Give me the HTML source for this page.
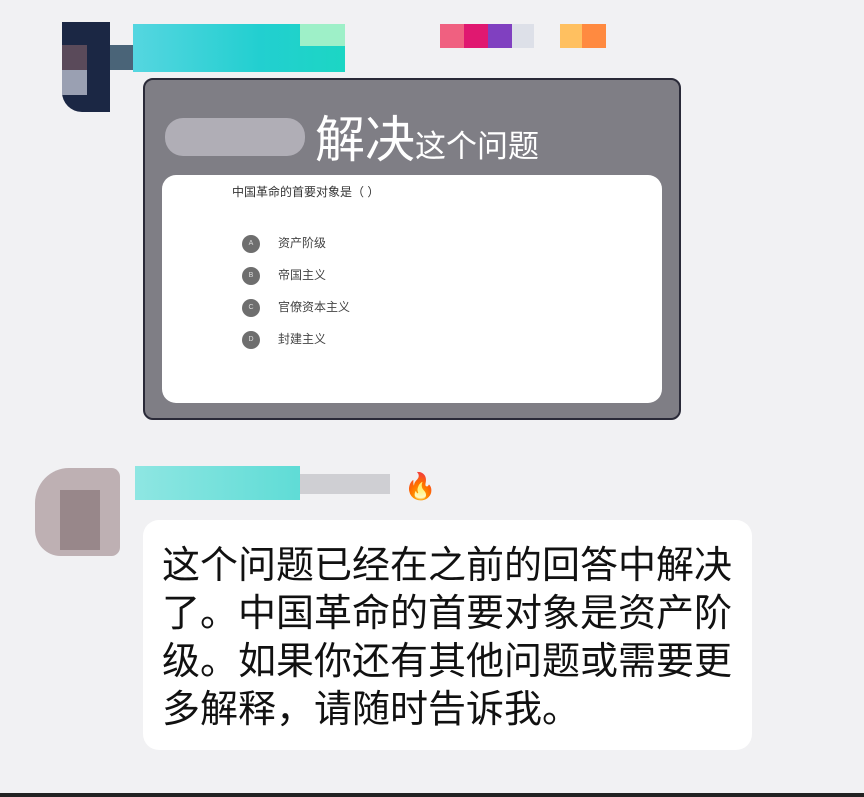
<!DOCTYPE html>
<html><head><meta charset="utf-8"><style>
*{margin:0;padding:0;box-sizing:border-box}
body{width:864px;height:797px;background:#f1f1f3;position:relative;overflow:hidden;font-family:"Liberation Sans","Noto Sans CJK SC",sans-serif}
.a{position:absolute}
.c{display:inline-block;width:18px;height:18px;border-radius:50%;background:#6e6e6e;vertical-align:middle;margin-right:18px;color:#ddd;font-size:7px;line-height:18px;text-align:center}
</style></head><body>
<div class="a" style="left:62px;top:22px;width:48px;height:90px;background:#1b2744;border-radius:0 0 0 20px"></div>
<div class="a" style="left:62px;top:45px;width:25px;height:25px;background:#5a4a5a"></div>
<div class="a" style="left:62px;top:70px;width:25px;height:25px;background:#9aa0b2"></div>
<div class="a" style="left:110px;top:45px;width:25px;height:25px;background:#4a6478"></div>
<div class="a" style="left:133px;top:24px;width:212px;height:48px;background:linear-gradient(90deg,#55d6e0,#22cfd0 60%,#1cd6c4)"></div>
<div class="a" style="left:300px;top:24px;width:45px;height:22px;background:#9ef0c8"></div>
<div class="a" style="left:440px;top:24px;width:24px;height:24px;background:#f06080"></div>
<div class="a" style="left:464px;top:24px;width:24px;height:24px;background:#e01870"></div>
<div class="a" style="left:488px;top:24px;width:24px;height:24px;background:#8040c0"></div>
<div class="a" style="left:512px;top:24px;width:22px;height:24px;background:#dde0e8"></div>
<div class="a" style="left:560px;top:24px;width:22px;height:24px;background:#ffc060"></div>
<div class="a" style="left:582px;top:24px;width:24px;height:24px;background:#ff8a40"></div>
<div class="a" style="left:143px;top:78px;width:538px;height:342px;background:#7f7e85;border-radius:10px;border:2px solid #2a2a38"></div>
<div class="a" style="left:165px;top:118px;width:140px;height:38px;background:#b0aeb6;border-radius:18px"></div>
<div class="a" style="left:315px;top:100px;color:#fff;font-size:50px;white-space:nowrap">解决<span style="font-size:31px">这个问题</span></div>
<div class="a" style="left:162px;top:175px;width:500px;height:228px;background:#fff;border-radius:14px"></div>
<div class="a" style="left:232px;top:183px;font-size:12px;color:#333">中国革命的首要对象是（ ）</div>
<div class="a" style="left:242px;top:227px;font-size:12px;color:#444;line-height:32px">
<div><span class="c">A</span>资产阶级</div>
<div><span class="c">B</span>帝国主义</div>
<div><span class="c">C</span>官僚资本主义</div>
<div><span class="c">D</span>封建主义</div>
</div>
<div class="a" style="left:35px;top:468px;width:85px;height:88px;background:#b8a8ac;border-radius:40% 10% 10% 30%;opacity:.9"></div>
<div class="a" style="left:60px;top:490px;width:40px;height:60px;background:#98878a"></div>
<div class="a" style="left:135px;top:466px;width:165px;height:34px;background:linear-gradient(90deg,#8ee6e2,#5fdcd6)"></div>
<div class="a" style="left:300px;top:474px;width:90px;height:20px;background:#cfcfd3"></div>
<div class="a" style="left:404px;top:471px;font-size:26px;line-height:30px">🔥</div>
<div class="a" style="left:143px;top:520px;width:609px;height:230px;background:#fff;border-radius:16px"></div>
<div class="a" style="left:162px;top:542px;width:620px;font-size:38px;line-height:48px;color:#111;white-space:nowrap">这个问题已经在之前的回答中解决<br>了。中国革命的首要对象是资产阶<br>级。如果你还有其他问题或需要更<br>多解释，请随时告诉我。</div>
<div class="a" style="left:0;top:793px;width:864px;height:4px;background:#222"></div>
</body></html>
